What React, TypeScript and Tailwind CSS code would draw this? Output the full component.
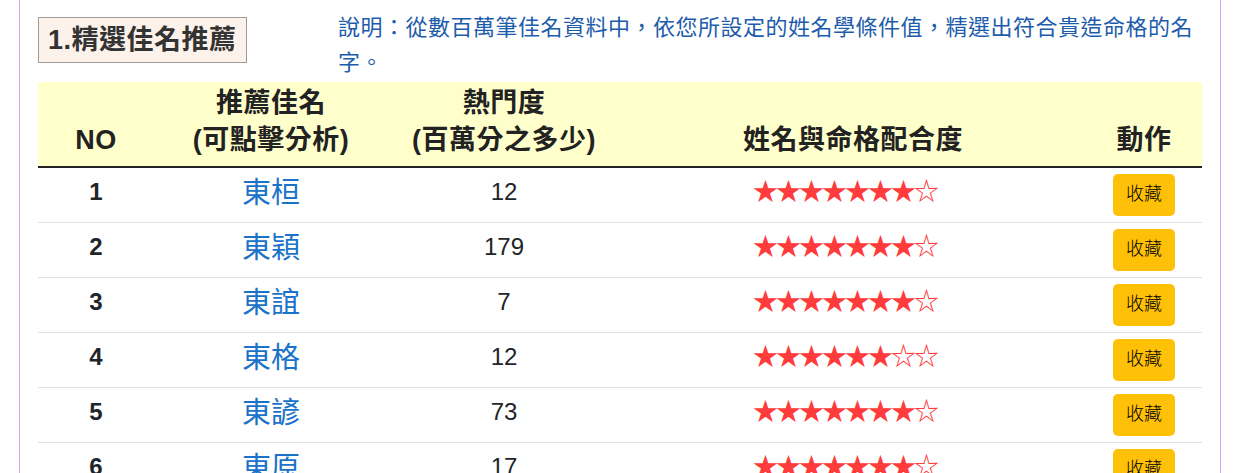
import React from 'react';

type NameRow = {
  no: number;
  name: string;
  hot: number;
  stars: number;
};

const rows: NameRow[] = [
  { no: 1, name: '東桓', hot: 12, stars: 7 },
  { no: 2, name: '東穎', hot: 179, stars: 7 },
  { no: 3, name: '東誼', hot: 7, stars: 7 },
  { no: 4, name: '東格', hot: 12, stars: 6 },
  { no: 5, name: '東諺', hot: 73, stars: 7 },
  { no: 6, name: '東原', hot: 17, stars: 7 },
  { no: 7, name: '東晉', hot: 25, stars: 6 },
];

function Stars({ count, total = 8 }: { count: number; total?: number }) {
  return (
    <span className="inline-flex">
      {Array.from({ length: total }).map((_, i) => (
        <span key={i} className="inline-block w-[23px] text-center text-[#ff3b3b]">
          {i < count ? '★' : '☆'}
        </span>
      ))}
    </span>
  );
}

export default function App() {
  return (
    <div
      className="min-h-[473px] bg-white"
      style={{ fontFamily: '"Liberation Sans", "Noto Sans CJK TC", sans-serif' }}
    >
      <div className="ml-[19px] w-[1202px] min-h-[473px] border-x border-[#cfa6f7] px-[18px] pt-[10px]">
        {/* Title + description */}
        <div className="flex items-start">
          <div className="w-[300px] shrink-0 pt-[7px]">
            <div className="inline-block h-[46px] border border-[#a09a98] bg-[#fdf2ea] px-[9px] text-[27px] font-bold leading-[44px] tracking-[0.5px] text-[#333]">
              1.精選佳名推薦
            </div>
          </div>
          <p className="flex-1 text-[22px] leading-[35px] tracking-[0.5px] text-[#1d5cab]">
            說明：從數百萬筆佳名資料中，依您所設定的姓名學條件值，精選出符合貴造命格的名字。
          </p>
        </div>

        {/* Result table */}
        <table className="mt-[2px] w-full table-fixed border-collapse text-[#212529]">
          <colgroup>
            <col className="w-[116px]" />
            <col className="w-[234px]" />
            <col className="w-[232px]" />
            <col className="w-[466px]" />
            <col className="w-[116px]" />
          </colgroup>
          <thead>
            <tr className="bg-[#ffffcc] text-[27px] font-bold leading-[37px] tracking-[0.5px] text-[#222]">
              <th className="border-b-2 border-[#222] pt-[3px] pb-[7px] align-bottom">NO</th>
              <th className="border-b-2 border-[#222] pt-[3px] pb-[7px] align-bottom">
                推薦佳名
                <br />
                (可點擊分析)
              </th>
              <th className="border-b-2 border-[#222] pt-[3px] pb-[7px] align-bottom">
                熱門度
                <br />
                (百萬分之多少)
              </th>
              <th className="border-b-2 border-[#222] pt-[3px] pb-[7px] align-bottom">姓名與命格配合度</th>
              <th className="border-b-2 border-[#222] pt-[3px] pb-[7px] align-bottom">動作</th>
            </tr>
          </thead>
          <tbody>
            {rows.map((r) => (
              <tr key={r.no} className="h-[55px] border-b border-[#dee2e6]">
                <td className="pb-[6px] text-center align-middle text-[24px] font-bold">{r.no}</td>
                <td className="text-center align-middle">
                  <a href="#" className="text-[29px] leading-none text-[#1a73c9]">
                    {r.name}
                  </a>
                </td>
                <td className="pb-[6px] text-center align-middle text-[24px]">{r.hot}</td>
                <td className="pb-[6px] pr-[16px] text-center align-middle text-[25px] leading-none">
                  <Stars count={r.stars} />
                </td>
                <td className="text-center align-middle">
                  <button className="h-[42px] rounded-[5px] bg-[#ffc107] px-[13px] text-[18px] font-light text-black">
                    收藏
                  </button>
                </td>
              </tr>
            ))}
          </tbody>
        </table>
      </div>
    </div>
  );
}
